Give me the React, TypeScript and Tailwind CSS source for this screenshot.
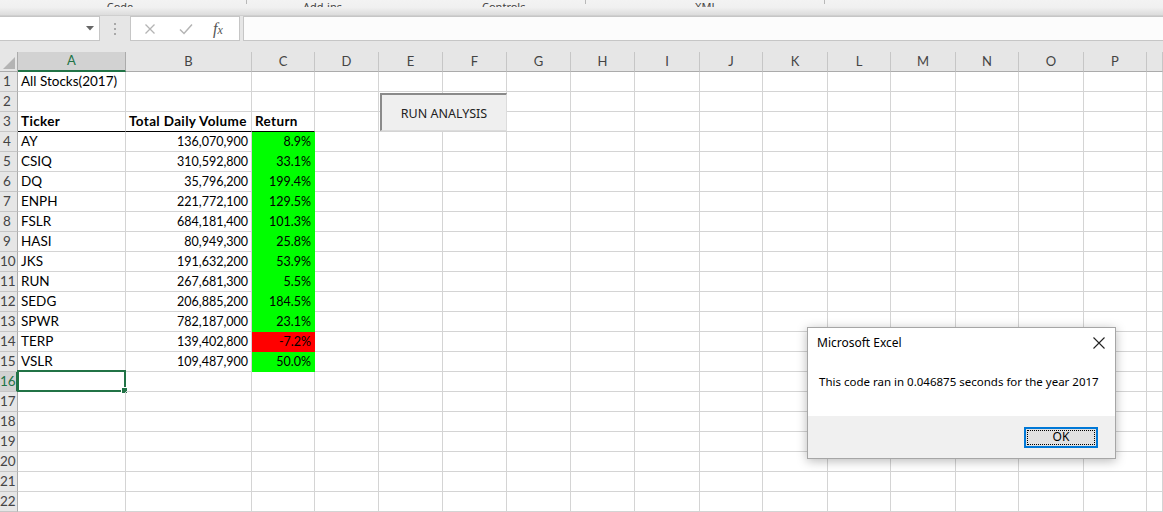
import React from "react";

const cols = ["A", "B", "C", "D", "E", "F", "G", "H", "I", "J", "K", "L", "M", "N", "O", "P", ""];

type Row = { t: string; v: string; r: string; neg?: boolean };
const data: Row[] = [
  { t: "AY", v: "136,070,900", r: "8.9%" },
  { t: "CSIQ", v: "310,592,800", r: "33.1%" },
  { t: "DQ", v: "35,796,200", r: "199.4%" },
  { t: "ENPH", v: "221,772,100", r: "129.5%" },
  { t: "FSLR", v: "684,181,400", r: "101.3%" },
  { t: "HASI", v: "80,949,300", r: "25.8%" },
  { t: "JKS", v: "191,632,200", r: "53.9%" },
  { t: "RUN", v: "267,681,300", r: "5.5%" },
  { t: "SEDG", v: "206,885,200", r: "184.5%" },
  { t: "SPWR", v: "782,187,000", r: "23.1%" },
  { t: "TERP", v: "139,402,800", r: "-7.2%", neg: true },
  { t: "VSLR", v: "109,487,900", r: "50.0%" },
];

const cellFont = { fontFamily: "Lato, 'Liberation Sans', sans-serif" };

function RowHeader({ n }: { n: number }) {
  const sel = n === 16;
  let cls = "h-[20px] flex items-end justify-start pb-[1px] border-b border-b-[#c6c6c6] text-[13.5px] leading-[17px] overflow-hidden ";
  cls += n < 10 ? "pl-[3px] " : "pl-0 ";
  cls += sel
    ? "bg-[#d2d2d2] text-[#217346] border-r-2 border-r-[#217346]"
    : "bg-[#e6e6e6] text-[#444444] border-r border-r-[#ababab]";
  return (
    <div className={cls} style={cellFont}>
      {n}
    </div>
  );
}

function Cell({
  children,
  align = "left",
  bold = false,
  num = false,
  fill,
  bottomBlack = false,
  selected = false,
}: {
  children?: React.ReactNode;
  align?: "left" | "right";
  bold?: boolean;
  num?: boolean;
  fill?: "green" | "red";
  bottomBlack?: boolean;
  selected?: boolean;
}) {
  let cls = "relative h-[20px] flex items-end pb-[1px] leading-[17px] text-black whitespace-nowrap border-r border-b ";
  cls += num ? "text-[12.5px] " : "text-[13.5px] ";
  cls += align === "right" ? "justify-end pr-[3px] " : "justify-start pl-[3px] ";
  if (bold) cls += "font-bold tracking-[0.35px] ";
  if (fill === "green") cls += "bg-[#00ff00] border-r-[#00ff00] border-b-[#00ff00] ";
  else if (fill === "red") cls += "bg-[#ff0000] border-r-[#ff0000] border-b-[#ff0000] ";
  else cls += "border-r-[#d4d4d4] border-b-[#d4d4d4] ";
  if (bottomBlack) cls += "border-b-black ";
  return (
    <div className={cls} style={cellFont}>
      {children}
      {selected && (
        <>
          <div className="absolute -left-[1px] -top-[2px] -right-[1px] -bottom-[1px] border-2 border-[#217346] pointer-events-none" />
          <div className="absolute -right-[3px] -bottom-[3px] w-[5px] h-[5px] bg-[#217346] border border-white box-content" />
        </>
      )}
    </div>
  );
}

export default function App() {
  const rows: React.ReactNode[] = [];
  for (let r = 1; r <= 22; r++) {
    rows.push(<RowHeader key={"h" + r} n={r} />);
    for (let c = 0; c < cols.length; c++) {
      const key = r + "-" + c;
      if (r === 1 && c === 0) {
        rows.push(<Cell key={key}>All Stocks(2017)</Cell>);
      } else if (r === 3 && c === 0) {
        rows.push(<Cell key={key} bold bottomBlack>Ticker</Cell>);
      } else if (r === 3 && c === 1) {
        rows.push(<Cell key={key} bold bottomBlack>Total Daily Volume</Cell>);
      } else if (r === 3 && c === 2) {
        rows.push(<Cell key={key} bold bottomBlack>Return</Cell>);
      } else if (r >= 4 && r <= 15 && c <= 2) {
        const d = data[r - 4];
        if (c === 0) rows.push(<Cell key={key}>{d.t}</Cell>);
        else if (c === 1) rows.push(<Cell key={key} align="right" num>{d.v}</Cell>);
        else rows.push(<Cell key={key} align="right" num fill={d.neg ? "red" : "green"}>{d.r}</Cell>);
      } else if (r === 16 && c === 0) {
        rows.push(<Cell key={key} selected />);
      } else {
        rows.push(<Cell key={key} />);
      }
    }
  }

  return (
    <div className="relative w-[1163px] h-[512px] overflow-hidden bg-white" style={{ fontFamily: "'Noto Sans', sans-serif" }}>
      {/* Ribbon remnant (group labels scrolled mostly out of view) */}
      <div className="relative h-[16px] bg-gradient-to-b from-[#f3f3f3] via-[#f0f0f0] to-[#dcdcdc] border-b border-[#cfcfcf] overflow-hidden">
        <div className="flex h-[7px] items-end text-[11px] leading-[11px] text-[#444]">
          <div className="w-[246px] flex justify-center pr-[6px] overflow-hidden h-[6px] items-end">
            <span className="-mb-[5px]">Code</span>
          </div>
          <div className="w-[1px] h-[4px] self-start bg-[#b8b8b8]" />
          <div className="w-[338px] flex overflow-hidden h-[6px] items-end">
            <span className="ml-[56px] -mb-[5px]">Add-ins</span>
            <span className="ml-[140px] -mb-[5px]">Controls</span>
          </div>
          <div className="w-[1px] h-[4px] self-start bg-[#b8b8b8]" />
          <div className="w-[238px] flex overflow-hidden h-[6px] items-end">
            <span className="ml-[109px] -mb-[5px]">XML</span>
          </div>
          <div className="w-[1px] h-[4px] self-start bg-[#b8b8b8]" />
        </div>
      </div>

      {/* Formula bar */}
      <div className="flex h-[25px] bg-[#e6e6e6]">
        <div className="w-[100px] h-[25px] bg-white border border-[#c6c6c6] border-l-0 flex items-center justify-end pr-[5px]">
          <svg width="8" height="5" viewBox="0 0 8 5">
            <path d="M0 0 L8 0 L4 4.5 Z" fill="#666" />
          </svg>
        </div>
        <div className="w-[30px] flex flex-col items-center justify-center gap-[3px]">
          <div className="w-[2px] h-[2px] bg-[#a8a8a8]" />
          <div className="w-[2px] h-[2px] bg-[#a8a8a8]" />
          <div className="w-[2px] h-[2px] bg-[#a8a8a8]" />
        </div>
        <div className="w-[110px] h-[25px] bg-white border border-[#c6c6c6] flex items-center">
          <svg className="ml-[13px]" width="12" height="12" viewBox="0 0 12 12">
            <path d="M1.5 1.5 L10.5 10.5 M10.5 1.5 L1.5 10.5" stroke="#b4b4b4" strokeWidth="1.3" fill="none" />
          </svg>
          <svg className="ml-[23px]" width="14" height="12" viewBox="0 0 14 12">
            <path d="M1 6.5 L5 10.5 L13 1.5" stroke="#b4b4b4" strokeWidth="1.5" fill="none" />
          </svg>
          <span
            className="ml-[20px] text-[16px] italic text-[#555] leading-none"
            style={{ fontFamily: "'Liberation Serif', serif" }}
          >
            f<span className="text-[12px]">x</span>
          </span>
        </div>
        <div className="w-[3px]" />
        <div className="flex-1 h-[25px] bg-[#fcfcfc] border border-[#c6c6c6] border-r-0" />
      </div>

      {/* spacer */}
      <div className="h-[11px] bg-[#e6e6e6]" />

      {/* Grid */}
      <div className="grid grid-cols-[18px_108px_126px_63px_64px_64px_64px_64px_64px_65px_63px_65px_63px_65px_63px_65px_63px_1fr]">
        <div className="h-[20px] bg-[#e6e6e6] border-r border-b border-[#ababab] flex items-end justify-end p-[2px]">
          <svg width="12" height="12" viewBox="0 0 12 12">
            <path d="M12 0 L12 12 L0 12 Z" fill="#b4b4b4" />
          </svg>
        </div>
        {cols.map((c, i) =>
          i === 0 ? (
            <div
              key={"c" + i}
              className="h-[20px] bg-[#d2d2d2] border-r border-r-[#ababab] border-b-2 border-b-[#217346] flex items-center justify-center text-[13px] text-[#217346]"
              style={cellFont}
            >
              {c}
            </div>
          ) : (
            <div
              key={"c" + i}
              className="h-[20px] bg-[#e6e6e6] border-r border-r-[#c6c6c6] border-b border-b-[#ababab] flex items-center justify-center text-[13px] text-[#444444]"
              style={cellFont}
            >
              {c}
            </div>
          )
        )}
        {rows}
      </div>

      {/* RUN ANALYSIS button (shape on sheet) */}
      <div className="absolute left-[380px] top-[93px] w-[127px] h-[38px] pt-[3px] bg-[#efefef] border-t-2 border-l-2 border-t-[#8a8a8a] border-l-[#8a8a8a] border-r border-b border-r-[#dcdcdc] border-b-[#dcdcdc] flex items-center justify-center text-[12.5px] text-[#222]">
        RUN ANALYSIS
      </div>

      {/* Message box */}
      <div className="absolute left-[807px] top-[327px] w-[309px] h-[132px] bg-white border border-[#a6a6a6] shadow-[0_2px_10px_rgba(0,0,0,0.28)] flex flex-col">
        <div className="flex items-center justify-between h-[28px] pl-[9px] pr-[10px] pt-[2px]">
          <span className="text-[12px] text-black">Microsoft Excel</span>
          <svg width="12" height="12" viewBox="0 0 12 12">
            <path d="M0.5 0.5 L11.5 11.5 M11.5 0.5 L0.5 11.5" stroke="#222" strokeWidth="1.1" fill="none" />
          </svg>
        </div>
        <div className="flex-1 pl-[11px] pt-[17px] text-[11.5px] text-black">
          This code ran in 0.046875 seconds for the year 2017
        </div>
        <div className="h-[42px] bg-[#f0f0f0] flex items-center justify-end pr-[17px]">
          <div className="w-[74px] h-[21px] bg-[#e1e1e1] border-2 border-[#0078d7] p-[1px]">
            <div className="w-full h-full border border-dotted border-black flex items-center justify-center text-[12px] text-black leading-none">
              OK
            </div>
          </div>
        </div>
      </div>
    </div>
  );
}
